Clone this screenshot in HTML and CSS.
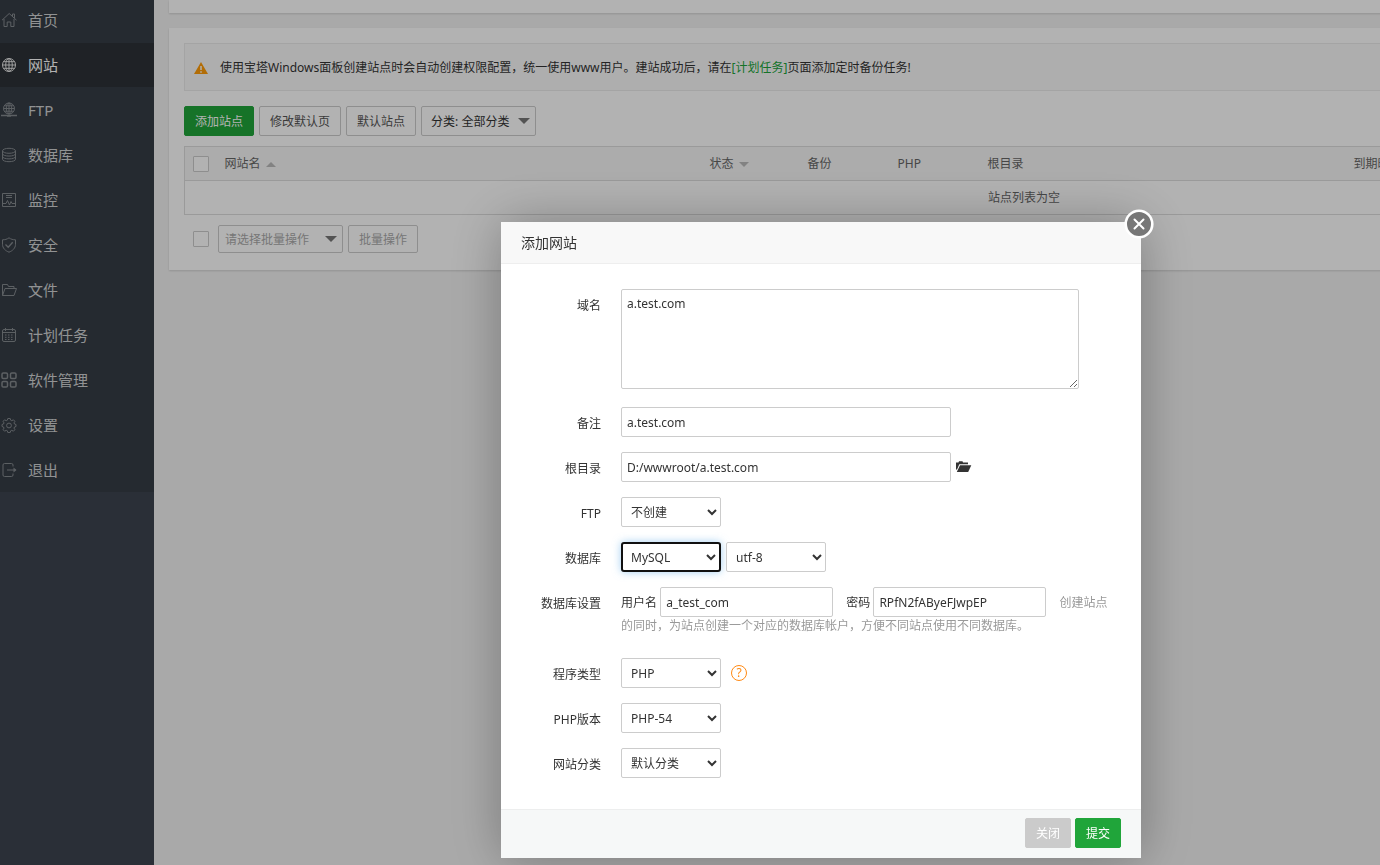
FILE: index.html
```html
<!DOCTYPE html>
<html lang="zh-CN">
<head>
    <meta charset="UTF-8">
    <meta name="viewport" content="width=device-width, initial-scale=1.0">
    <title>网站</title>
    <link rel="stylesheet" href="styles.css">
</head>
<body>
    <div class="layout">
        <nav class="sidebar">
            <ul class="menu">
                <li><a href="#home"><svg class="menu-icon" viewBox="0 0 16 16"><path d="M1 8.200 8.200 1.500l7.300 6.700M3 7v7.500h3.200V10h3.600v4.500H13V7M11.500 4V2h2v4"/></svg>首页</a></li>
                <li class="current"><a href="#site"><svg class="menu-icon" viewBox="0 0 16 16"><circle cx="8" cy="8" r="6.500"/><ellipse cx="8" cy="8" rx="3.300" ry="6.500"/><path d="M8 1.500v13M1.500 8h13M2.500 4.700h11M2.500 11.300h11"/></svg>网站</a></li>
                <li><a href="#ftp"><svg class="menu-icon" viewBox="0 0 16 16"><circle cx="8" cy="6.500" r="5.500"/><ellipse cx="8" cy="6.500" rx="2.700" ry="5.500"/><path d="M8 1v11M2.500 6.500h11M3.300 3.800h9.400M3.300 9.200h9.400"/><path d="M0 13.500h16M6 14h4" stroke-width="1.500"/></svg>FTP</a></li>
                <li><a href="#database"><svg class="menu-icon" viewBox="0 0 16 16"><ellipse cx="8" cy="3.800" rx="6.500" ry="2.500"/><path d="M1.500 3.800v8.400c0 3.300 13 3.300 13 0V3.800M1.500 6.600c0 3.300 13 3.300 13 0M1.500 9.400c0 3.300 13 3.300 13 0"/></svg>数据库</a></li>
                <li><a href="#control"><svg class="menu-icon" viewBox="0 0 16 16"><path d="M1.500 1.500h13v13h-13zM5 3.500h6M5 5.500h6M2 11.500h3l1.500-3 2 4.500 1.500-3.500 1 2h3"/></svg>监控</a></li>
                <li><a href="#firewall"><svg class="menu-icon" viewBox="0 0 16 16"><path d="M8 .8c2 1.500 4 2 6.500 2v4.500c0 4-3 6.500-6.500 7.900-3.500-1.400-6.500-3.900-6.500-7.900V2.800C4 2.800 6 2.300 8 .8z"/><path d="m4.500 7.500 2.700 2.700 4.500-5" stroke-width="1.300"/></svg>安全</a></li>
                <li><a href="#files"><svg class="menu-icon" viewBox="0 0 16 16"><path d="M1.500 13.500v-11h5l1 2H13V6M1.500 13.500 4 6.500h11.500l-2.500 7z"/></svg>文件</a></li>
                <li><a href="#crontab"><svg class="menu-icon" viewBox="0 0 16 16"><rect x="1.500" y="2.500" width="13" height="12" rx="1.500"/><path d="M2 5.500h12M4.500 1v3M11.500 1v3"/><path d="M4 8h9M4 10.300h9M4 12.500h9" stroke-dasharray="1.500 1.500"/></svg>计划任务</a></li>
                <li><a href="#soft"><svg class="menu-icon menu-icon-bold" viewBox="0 0 16 16"><rect x="1" y="1" width="5.500" height="5.500" rx="1.300"/><rect x="9.500" y="1" width="5.500" height="5.500" rx="1.300"/><rect x="1" y="9.500" width="5.500" height="5.500" rx="1.300"/><rect x="9.500" y="9.500" width="5.500" height="5.500" rx="1.300"/></svg>软件管理</a></li>
                <li><a href="#config"><svg class="menu-icon" viewBox="0 0 16 16"><path d="m6.800 1.500h2.400l.5 1.700 1.100.5 1.600-.9 1.500 1.500-.9 1.600.5 1.100 1.500.5v2l-1.500.5-.5 1.100.9 1.600-1.500 1.500-1.600-.9-1.100.5-.5 1.700H6.800l-.5-1.700-1.100-.5-1.600.9-1.500-1.500.9-1.600-.5-1.100L1 9.500v-2L2.500 7l.5-1.100-.9-1.600 1.500-1.500 1.600.9 1.100-.5z"/><circle cx="8" cy="8.500" r="2.400"/></svg>设置</a></li>
                <li><a href="#logout"><svg class="menu-icon" viewBox="0 0 16 16"><path d="M12 4.500V3q0-1.500-1.500-1.500h-7Q2 1.500 2 3v10q0 1.500 1.500 1.500h7Q12 14.500 12 13v-1.500M6 8h9"/><path d="M12.500 5.500 15.500 8l-3 2.500z" fill="currentColor" stroke="none"/></svg>退出</a></li>
            </ul>
        </nav>

        <main class="main">
            <div class="panel panel-search"></div>

            <div class="panel panel-list">
                <div class="tips">
                    <svg class="tips-icon" viewBox="0 0 14 12"><path d="M7 0 14 12H0z" fill="#ff9c0a"/><path d="M7 4v4M7 9.300v1.400" stroke="#fff" stroke-width="1.500"/></svg>
                    <p>使用宝塔Windows面板创建站点时会自动创建权限配置，统一使用www用户。建站成功后，请在<a href="#crontab">[计划任务]</a>页面添加定时备份任务!</p>
                </div>

                <div class="toolbar">
                    <button type="button" class="btn btn-success">添加站点</button>
                    <button type="button" class="btn">修改默认页</button>
                    <button type="button" class="btn">默认站点</button>
                    <span class="drop drop-type">
                        <select aria-label="分类"><option>分类: 全部分类</option></select>
                    </span>
                </div>

                <table class="table">
                    <colgroup>
                        <col class="col-check">
                        <col class="col-name">
                        <col class="col-status">
                        <col class="col-small">
                        <col class="col-small">
                        <col class="col-path">
                        <col>
                    </colgroup>
                    <thead>
                        <tr>
                            <th><input type="checkbox" class="check" aria-label="全选"></th>
                            <th>网站名<span class="sort sort-up"></span></th>
                            <th>状态<span class="sort sort-down"></span></th>
                            <th>备份</th>
                            <th>PHP</th>
                            <th>根目录</th>
                            <th>到期时间</th>
                        </tr>
                    </thead>
                    <tbody>
                        <tr>
                            <td colspan="7" class="empty">站点列表为空</td>
                        </tr>
                    </tbody>
                </table>

                <div class="batch">
                    <input type="checkbox" class="check" aria-label="选择全部站点">
                    <span class="drop drop-batch">
                        <select aria-label="批量操作"><option>请选择批量操作</option></select>
                    </span>
                    <button type="button" class="btn btn-muted">批量操作</button>
                </div>
            </div>
        </main>
    </div>

    <div class="shade"></div>

    <div class="dialog" role="dialog" aria-labelledby="dialog-title">
        <h2 class="dialog-title" id="dialog-title">添加网站</h2>
        <button type="button" class="dialog-close" aria-label="关闭窗口">
            <svg viewBox="0 0 30 30"><circle cx="15" cy="15" r="13.300" fill="#777" stroke="#fff" stroke-width="2.600"/><path d="m10.500 10.500 9 9m0-9-9 9" stroke="#fff" stroke-width="2" stroke-linecap="round"/></svg>
        </button>

        <form>
            <div class="dialog-body">
                <div class="line line-domain">
                    <label class="tname" for="domain">域名</label>
                    <div class="info"><textarea id="domain" class="field">a.test.com</textarea></div>
                </div>
                <div class="line">
                    <label class="tname" for="remark">备注</label>
                    <div class="info"><input type="text" id="remark" class="field field-long" value="a.test.com"></div>
                </div>
                <div class="line">
                    <label class="tname" for="path">根目录</label>
                    <div class="info">
                        <input type="text" id="path" class="field field-long" value="D:/wwwroot/a.test.com">
                        <button type="button" class="folder" aria-label="选择目录">
                            <svg viewBox="0 0 16 12"><path d="M0 8V1.500h2.500L3 .3h3.500l.5 1.200h5V3.300H3.300L.8 9z"/><path d="M4 4.200h11.300L12.200 11H.8z"/></svg>
                        </button>
                    </div>
                </div>
                <div class="line">
                    <label class="tname" for="ftp">FTP</label>
                    <div class="info"><select id="ftp" class="field"><option>不创建</option></select></div>
                </div>
                <div class="line">
                    <label class="tname" for="sql">数据库</label>
                    <div class="info">
                        <select id="sql" class="field field-active"><option>MySQL</option></select>
                        <select class="field" aria-label="编码"><option>utf-8</option></select>
                    </div>
                </div>
                <div class="line line-data">
                    <span class="tname">数据库设置</span>
                    <div class="info-text">
                        <label for="datauser">用户名</label>
                        <input type="text" id="datauser" class="field field-data" value="a_test_com">
                        <label for="datapass" class="label-pass">密码</label>
                        <input type="text" id="datapass" class="field field-data" value="RPfN2fAByeFJwpEP">
                        <span class="hint">创建站点的同时，为站点创建一个对应的数据库帐户，方便不同站点使用不同数据库。</span>
                    </div>
                </div>
                <div class="line">
                    <label class="tname" for="type">程序类型</label>
                    <div class="info">
                        <select id="type" class="field"><option>PHP</option></select>
                        <a href="#help" class="help" aria-label="帮助">?</a>
                    </div>
                </div>
                <div class="line">
                    <label class="tname" for="version">PHP版本</label>
                    <div class="info"><select id="version" class="field"><option>PHP-54</option></select></div>
                </div>
                <div class="line">
                    <label class="tname" for="category">网站分类</label>
                    <div class="info"><select id="category" class="field"><option>默认分类</option></select></div>
                </div>
            </div>

            <div class="dialog-footer">
                <button type="button" class="btn btn-close">关闭</button>
                <button type="submit" class="btn btn-success">提交</button>
            </div>
        </form>
    </div>
</body>
</html>
```
FILE: styles.css
```css
* {
    margin: 0;
    padding: 0;
    box-sizing: border-box;
}

body {
    background: #f3f3f3;
    color: #333;
    font-family: "Noto Sans", "Noto Sans CJK SC", sans-serif;
    font-size: 12px;
    line-height: 18px;
    overflow: hidden;
}

button,
input,
select,
textarea {
    font: inherit;
    color: inherit;
}

a {
    color: #20a53a;
    text-decoration: none;
}

/* sidebar */
.layout {
    display: flex;
    min-height: 100vh;
    overflow: hidden;
}

.sidebar {
    flex: 0 0 154px;
    background: #3d444f;
}

.menu {
    margin-top: -2px;
    background: #363d46;
    list-style: none;
}

.menu li {
    margin-bottom: 1px;
}

.menu li:last-child {
    margin-bottom: 0;
}

.menu a {
    display: flex;
    align-items: center;
    gap: 11px;
    height: 44px;
    padding-left: 1px;
    color: #d0d2d3;
    font-size: 15px;
}

.menu .current a {
    background: #2d3237;
    color: #fff;
}

.menu-icon {
    flex: none;
    width: 16px;
    height: 16px;
    color: #858a8f;
    fill: none;
    stroke: currentColor;
    stroke-width: 1;
}

.menu-icon-bold {
    stroke-width: 1.5;
}

.current .menu-icon {
    color: #e6e6e6;
}

/* content */
.main {
    flex: 1 0 1740px;
    padding: 0 15px;
}

.panel {
    background: #fff;
    box-shadow: 0 1px 2px rgba(0, 0, 0, 0.15);
}

.panel-search {
    height: 13px;
    margin-bottom: 15px;
}

.panel-list {
    padding: 15px 15px 17px;
}

.tips {
    display: flex;
    align-items: center;
    gap: 12px;
    height: 48px;
    padding: 2px 9px 0;
    border: 1px solid #ebebeb;
    background: #fafafa;
}

.tips-icon {
    width: 14px;
    height: 12px;
}

.toolbar {
    display: flex;
    gap: 5px;
    margin: 15px 0 10px;
}

.btn {
    height: 30px;
    padding: 2px 10px 0;
    border: 1px solid #ccc;
    border-radius: 2px;
    background: #fff;
    color: #555;
    cursor: pointer;
}

.btn-success {
    border-color: #20a53a;
    background: #20a53a;
    color: #fff;
}

.drop {
    position: relative;
}

.drop select {
    width: 100%;
    height: 100%;
    padding: 2px 9px 0;
    border: 1px solid #ccc;
    border-radius: 2px;
    background: #fff;
    appearance: none;
}

.drop::after {
    content: "";
    position: absolute;
    top: 50%;
    right: 6px;
    border: 6px solid transparent;
    border-top-color: #777;
    border-bottom: 0;
    transform: translateY(-50%);
    pointer-events: none;
}

.drop-type {
    width: 115px;
    height: 30px;
}

.table {
    width: 100%;
    border: 1px solid #ddd;
    border-collapse: collapse;
    table-layout: fixed;
    color: #666;
}

.table th,
.table td {
    height: 34px;
    padding: 0 8px;
    border-top: 1px solid #ddd;
    font-weight: normal;
    text-align: left;
    white-space: nowrap;
}

.table thead {
    background: #f6f6f6;
}

.table .empty {
    text-align: center;
}

.col-check {
    width: 32px;
}

.col-name {
    width: 485px;
}

.col-status {
    width: 98px;
}

.col-small {
    width: 90px;
}

.col-path {
    width: 366px;
}

.check {
    display: block;
    width: 16px;
    height: 16px;
    border: 1px solid #ccc;
    border-radius: 1px;
    background: #fff;
    appearance: none;
}

.sort {
    display: inline-block;
    margin-left: 5px;
    border: 5px solid transparent;
    vertical-align: middle;
}

.sort-up {
    border-top: 0;
    border-bottom-color: #bbb;
}

.sort-down {
    border-bottom: 0;
    border-top-color: #bbb;
}

.batch {
    display: flex;
    align-items: center;
    gap: 5px;
    margin-top: 10px;
    padding-left: 9px;
}

.batch .check {
    margin-right: 4px;
}

.drop-batch {
    width: 125px;
    height: 28px;
}

.drop-batch select {
    padding: 2px 6px 0;
    color: #aaa;
}

.btn-muted {
    height: 28px;
    color: #aaa;
}

/* dialog */
.shade {
    position: fixed;
    inset: 0;
    background: rgba(0, 0, 0, 0.3);
}

.dialog {
    position: fixed;
    top: 222px;
    left: 501px;
    width: 640px;
    background: #fff;
    box-shadow: 1px 1px 50px rgba(0, 0, 0, 0.3);
}

.dialog-title {
    height: 42px;
    padding: 0 20px;
    border-bottom: 1px solid #eee;
    background: #f8f8f8;
    font-size: 14px;
    font-weight: normal;
    line-height: 42px;
}

.dialog-close {
    position: absolute;
    top: -13px;
    right: -13px;
    width: 30px;
    height: 30px;
    border: 0;
    background: none;
    cursor: pointer;
}

.dialog-close svg {
    display: block;
}

.dialog-body {
    padding: 25px 25px 31px 20px;
}

.line {
    display: flex;
    margin-bottom: 15px;
}

.line:last-child {
    margin-bottom: 0;
}

.line-domain {
    margin-bottom: 18px;
}

.line-data {
    margin-bottom: 23px;
}

.tname {
    flex: 0 0 100px;
    height: 30px;
    padding-right: 20px;
    line-height: 34px;
    text-align: right;
}

.info {
    display: flex;
    flex: 1;
    align-items: center;
    gap: 5px;
}

.info-text {
    flex: 1;
}

.field {
    height: 30px;
    padding: 0 5px;
    border: 1px solid #ccc;
    border-radius: 2px;
    background: #fff;
}

textarea.field {
    width: 458px;
    height: 100px;
    padding: 5px;
    resize: both;
}

select.field {
    width: 100px;
}

.field-long {
    width: 330px;
}

.field-data {
    width: 173px;
}

select.field-active {
    padding: 0 4px;
    border: 2px solid #101010;
    border-radius: 3px;
    box-shadow: 0 0 8px rgba(102, 175, 233, 0.6);
}

.folder {
    width: 16px;
    height: 12px;
    border: 0;
    background: none;
    cursor: pointer;
}

.folder svg {
    display: block;
    fill: #333;
}

.label-pass {
    margin-left: 10px;
}

.hint {
    margin-left: 10px;
    color: #999;
}

.help {
    width: 16px;
    height: 16px;
    margin-left: 5px;
    border: 1px solid #ff8a14;
    border-radius: 50%;
    color: #ff8a14;
    line-height: 14px;
    text-align: center;
}

.dialog-footer {
    display: flex;
    justify-content: flex-end;
    gap: 4px;
    padding: 8px 20px 10px;
    border-top: 1px solid #edeeee;
    background: #f6f8f8;
}

.btn-close {
    border-color: #cbcbcb;
    background: #cbcbcb;
    color: #fff;
}
```
